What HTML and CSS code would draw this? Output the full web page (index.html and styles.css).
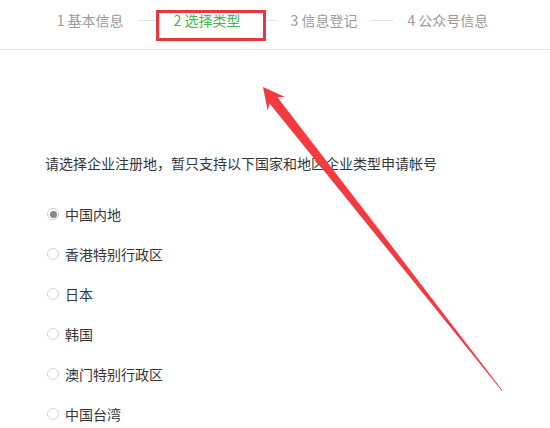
FILE: index.html
```html
<!DOCTYPE html>
<html lang="zh-CN">
<head>
    <meta charset="UTF-8">
    <meta name="viewport" content="width=device-width, initial-scale=1.0">
    <title>选择类型</title>
    <link rel="stylesheet" href="styles.css">
</head>
<body>
    <div id="steps">
        <span class="step">1 基本信息</span>
        <span class="step-line"></span>
        <span class="step step-on">2 选择类型</span>
        <span class="step-line"></span>
        <span class="step">3 信息登记</span>
        <span class="step-line"></span>
        <span class="step">4 公众号信息</span>
    </div>

    <div id="main">
        <p class="tips">请选择企业注册地，暂只支持以下国家和地区企业类型申请帐号</p>
        <label class="opt"><span class="radio radio-on"></span>中国内地</label>
        <label class="opt"><span class="radio"></span>香港特别行政区</label>
        <label class="opt"><span class="radio"></span>日本</label>
        <label class="opt"><span class="radio"></span>韩国</label>
        <label class="opt"><span class="radio"></span>澳门特别行政区</label>
        <label class="opt"><span class="radio"></span>中国台湾</label>
    </div>

    <svg id="arrow" width="550" height="428" viewBox="0 0 550 428">
        <polygon points="263,87 285,97 277.4,97.2 502.5,390.5 501.5,390.5 269.6,103.4 267.7,110.7" fill="#f23a3f"/>
    </svg>
</body>
</html>
```

FILE: styles.css
```css
body{
    font-family: "Noto Sans CJK SC", "Liberation Sans", sans-serif;
    background-color: white;
    color: #353535;
    margin: 0;
    width: 550px;
    height: 428px;
    overflow: hidden;
    position: relative;
}
#steps{
    display: flex;
    justify-content: center;
    align-items: flex-start;
    height: 50px;
    padding: 10px 5px 0 0;
    box-sizing: border-box;
    border-bottom: 1px solid #e7e7e7;
    font-size: 14px;
    line-height: 20px;
    color: #9a9a9a;
}
.step{
    white-space: nowrap;
}
.step-line{
    width: 22px;
    height: 1px;
    margin: 10px 14px 0;
    background-color: #e3e3e3;
}
.step-on{
    color: #44b549;
    position: relative;
    z-index: 0;
}
.step-on::before{
    content: "";
    position: absolute;
    left: -18px;
    right: -25px;
    top: 0;
    height: 31px;
    box-sizing: border-box;
    border: 3px solid #e5393e;
    background-color: white;
    z-index: -1;
}
#main{
    padding: 103px 0 0 45px;
    font-size: 14px;
}
.tips{
    margin: 0 0 21px;
    line-height: 20px;
}
.opt{
    display: flex;
    align-items: center;
    height: 40px;
    line-height: 20px;
}
.radio{
    width: 12px;
    height: 12px;
    box-sizing: border-box;
    border: 1px solid #d6d6d6;
    border-radius: 50%;
    margin: 0 6px 0 2px;
    display: flex;
    align-items: center;
    justify-content: center;
}
.radio-on{
    border-color: #cfcfcf;
}
.radio-on::after{
    content: "";
    width: 7px;
    height: 7px;
    border-radius: 50%;
    background-color: #888;
}
#arrow{
    position: absolute;
    left: 0;
    top: 0;
    pointer-events: none;
}
```
